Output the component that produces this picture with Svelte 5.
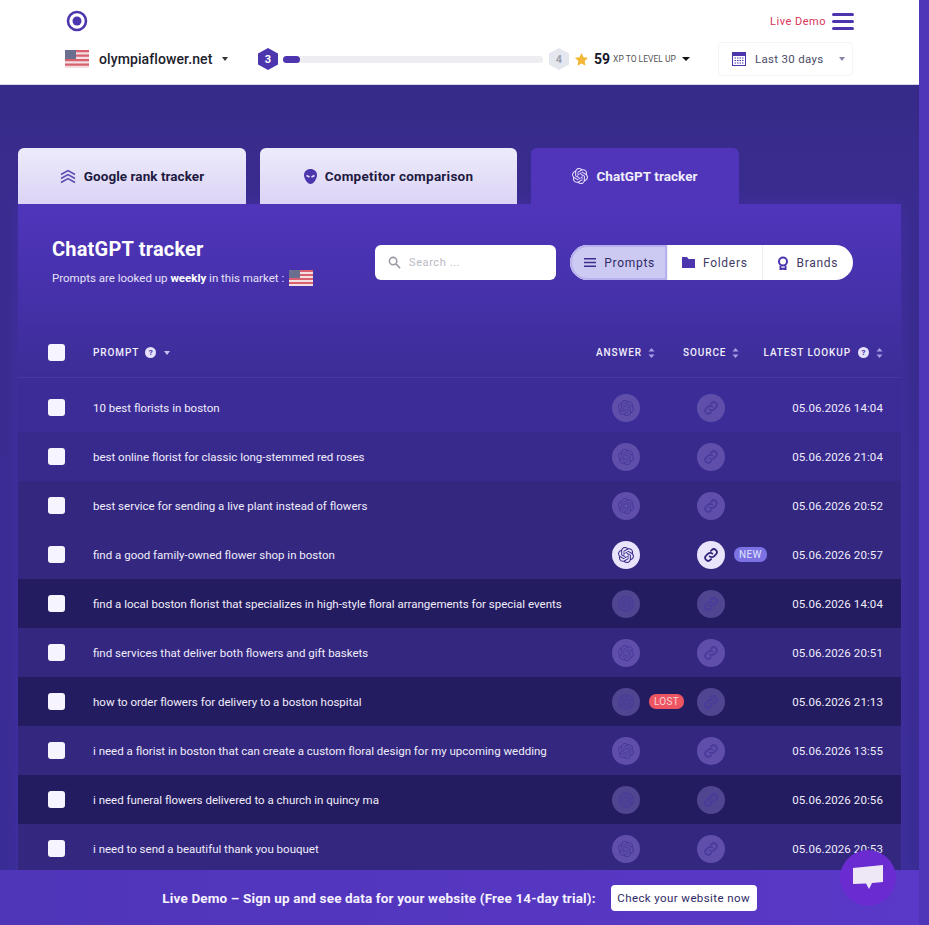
<script>
	const rows = [
		{ text: '10 best florists in boston', date: '05.06.2026 14:04', tone: 'r1' },
		{ text: 'best online florist for classic long-stemmed red roses', date: '05.06.2026 21:04', tone: 'r2' },
		{ text: 'best service for sending a live plant instead of flowers', date: '05.06.2026 20:52', tone: 'r3' },
		{ text: 'find a good family-owned flower shop in boston', date: '05.06.2026 20:57', tone: 'r3', lit: true, tag: 'NEW' },
		{ text: 'find a local boston florist that specializes in high-style floral arrangements for special events', date: '05.06.2026 14:04', tone: 'r5', faint: true },
		{ text: 'find services that deliver both flowers and gift baskets', date: '05.06.2026 20:51', tone: 'r3' },
		{ text: 'how to order flowers for delivery to a boston hospital', date: '05.06.2026 21:13', tone: 'r5', faint: true, lost: true },
		{ text: 'i need a florist in boston that can create a custom floral design for my upcoming wedding', date: '05.06.2026 13:55', tone: 'r3' },
		{ text: 'i need funeral flowers delivered to a church in quincy ma', date: '05.06.2026 20:56', tone: 'r5', faint: true },
		{ text: 'i need to send a beautiful thank you bouquet', date: '05.06.2026 20:53', tone: 'r3' }
	];

	const gptPath = 'M22.2819 9.8211a5.9847 5.9847 0 0 0-.5157-4.9108 6.0462 6.0462 0 0 0-6.5098-2.9A6.0651 6.0651 0 0 0 4.9807 4.1818a5.9847 5.9847 0 0 0-3.9977 2.9 6.0462 6.0462 0 0 0 .7427 7.0966 5.98 5.98 0 0 0 .511 4.9107 6.051 6.051 0 0 0 6.5146 2.9001A5.9847 5.9847 0 0 0 13.2599 24a6.0557 6.0557 0 0 0 5.7718-4.2058 5.9894 5.9894 0 0 0 3.9977-2.9001 6.0557 6.0557 0 0 0-.7475-7.0729zm-9.022 12.6081a4.4755 4.4755 0 0 1-2.8764-1.0408l.1419-.0804 4.7783-2.7582a.7948.7948 0 0 0 .3927-.6813v-6.7369l2.02 1.1686a.071.071 0 0 1 .038.052v5.5826a4.504 4.504 0 0 1-4.4945 4.4944zm-9.6607-4.1254a4.4708 4.4708 0 0 1-.5346-3.0137l.142.0852 4.783 2.7582a.7712.7712 0 0 0 .7806 0l5.8428-3.3685v2.3324a.0804.0804 0 0 1-.0332.0615L9.74 19.9502a4.4992 4.4992 0 0 1-6.1408-1.6464zM2.3408 7.8956a4.485 4.485 0 0 1 2.3655-1.9728V11.6a.7664.7664 0 0 0 .3879.6765l5.8144 3.3543-2.0201 1.1685a.0757.0757 0 0 1-.071 0l-4.8303-2.7865A4.504 4.504 0 0 1 2.3408 7.872zm16.5963 3.8558L13.1038 8.364 15.1192 7.2a.0757.0757 0 0 1 .071 0l4.8303 2.7913a4.4944 4.4944 0 0 1-.6765 8.1042v-5.6772a.79.79 0 0 0-.407-.667zm2.0107-3.0231l-.142-.0852-4.7735-2.7818a.7759.7759 0 0 0-.7854 0L9.409 9.2297V6.8974a.0662.0662 0 0 1 .0284-.0615l4.8303-2.7866a4.4992 4.4992 0 0 1 6.6802 4.66zM8.3065 12.863l-2.02-1.1638a.0804.0804 0 0 1-.038-.0567V6.0742a4.4992 4.4992 0 0 1 7.3757-3.4537l-.142.0805L8.704 5.459a.7948.7948 0 0 0-.3927.6813zm1.0976-2.3654l2.602-1.4998 2.6069 1.4998v2.9994l-2.5974 1.4997-2.6067-1.4997Z';
</script>

{#snippet flag(w, h)}
	<svg class="flag" width={w} height={h} viewBox="0 0 24 16" preserveAspectRatio="none">
		<rect width="24" height="16" fill="#f3dfe2" />
		<rect width="24" height="2" fill="#d8606f" />
		<rect y="4" width="24" height="2" fill="#d8606f" />
		<rect y="8" width="24" height="2" fill="#d8606f" />
		<rect y="12" width="24" height="2" fill="#d8606f" />
		<rect width="11" height="8" fill="#6b6f8f" />
	</svg>
{/snippet}

{#snippet gpt(color)}
	<svg width="16" height="16" viewBox="0 0 24 24" fill={color}>
		<path d={gptPath} />
	</svg>
{/snippet}

{#snippet chain(color)}
	<svg width="16" height="16" viewBox="0 0 24 24" fill="none" stroke={color} stroke-width="2.6" stroke-linecap="round">
		<path d="M10 14a4.5 4.5 0 0 0 6.4 0l3-3a4.5 4.5 0 0 0-6.4-6.4l-1.2 1.2" />
		<path d="M14 10a4.5 4.5 0 0 0-6.4 0l-3 3a4.5 4.5 0 0 0 6.4 6.4l1.2-1.2" />
	</svg>
{/snippet}

{#snippet help()}
	<span class="help">?</span>
{/snippet}

{#snippet sorter()}
	<svg class="sorter" width="7" height="10" viewBox="0 0 7 10" fill="#a99be6">
		<path d="M3.5 0 6.5 3.5H.5zM3.5 10 .5 6.5h6z" />
	</svg>
{/snippet}

<div class="page">
	<div class="content">
		<header class="topbar">
			<div class="top-line">
				<svg width="22" height="22" viewBox="0 0 22 22">
					<circle cx="11" cy="11" r="9" fill="none" stroke="#4d35ae" stroke-width="2.6" />
					<circle cx="11" cy="11" r="4.5" fill="#4d35ae" />
				</svg>
				<div class="top-right">
					<span class="live">Live Demo</span>
					<div class="burger"><i></i><i></i><i></i></div>
				</div>
			</div>
			<div class="sub-line">
				<div class="site">
					{@render flag(24, 18)}
					<span class="site-name">olympiaflower.net</span>
					<span class="caret dark"></span>
				</div>
				<div class="level">
					<svg width="22" height="24" viewBox="0 0 22 24">
						<path d="M11 1 21 6.5v11L11 23 1 17.5v-11z" fill="#4d35ae" />
						<text x="11" y="16" text-anchor="middle" class="hex-num">3</text>
					</svg>
					<div class="progress"><div class="progress-fill"></div></div>
					<svg width="22" height="24" viewBox="0 0 22 24">
						<path d="M11 1 21 6.5v11L11 23 1 17.5v-11z" fill="#e4e7ee" />
						<text x="11" y="16" text-anchor="middle" class="hex-num off">4</text>
					</svg>
					<svg class="star" width="15" height="15" viewBox="0 0 24 24"><path d="M12 1.5l3.2 6.9 7.3.9-5.4 5.1 1.4 7.4L12 18.2l-6.5 3.6 1.4-7.4L1.5 9.3l7.3-.9z" fill="#f2b736" /></svg>
					<span class="xp">59</span>
					<span class="xp-label">XP TO LEVEL UP</span>
					<span class="caret black"></span>
				</div>
				<div class="range">
					<svg width="14" height="14" viewBox="0 0 14 14" fill="none" stroke="#4d35ae">
						<rect x=".5" y="1.5" width="13" height="12" />
						<rect x=".5" y=".5" width="13" height="3" fill="#4d35ae" />
						<path d="M2.5 6h9M2.5 8.5h9M2.5 11h9" stroke-dasharray="1.5 1" />
					</svg>
					<span>Last 30 days</span>
					<span class="caret grey"></span>
				</div>
			</div>
		</header>

		<main class="main">
			<nav class="tabs">
				<button class="tab t1">
					<svg width="16" height="15" viewBox="0 0 16 15" fill="none" stroke="#5b4bb0" stroke-width="1.5">
						<path d="M1 5.5 8 1.5l7 4M1 9.5l7-4 7 4M1 13.5l7-4 7 4" />
					</svg>
					Google rank tracker
				</button>
				<button class="tab t2">
					<svg width="13" height="15" viewBox="0 0 13 15"><path d="M6.5 0C10 0 13 2.5 13 6c0 4-3.500 9-6.500 9S0 10 0 6c0-3.500 3-6 6.500-6z" fill="#4d35ae" /><path d="M2.5 6.5 5.500 8M10.500 6.500 7.500 8" stroke="#e6e0fa" stroke-width="1.5" /></svg>
					Competitor comparison
				</button>
				<button class="tab active">
					{@render gpt('#e6e0fa')}
					ChatGPT tracker
				</button>
			</nav>

			<section class="panel">
				<div class="panel-head">
					<div class="heading">
						<h1>ChatGPT tracker</h1>
						<p><span>Prompts are looked up <b>weekly</b> in this market :</span> {@render flag(24, 16)}</p>
					</div>
					<div class="search">
						<svg width="13" height="13" viewBox="0 0 14 14" fill="none" stroke="#9a9aa6" stroke-width="1.7"><circle cx="5.5" cy="5.5" r="4" /><path d="M8.5 8.5 13 13" /></svg>
						<span>Search ...</span>
					</div>
					<div class="segments">
						<div class="seg on">
							<svg width="13" height="11" viewBox="0 0 13 11" stroke="#3b2d8c" stroke-width="1.6"><path d="M0 1.5h13M0 5.5h13M0 9.5h13" /></svg>
							Prompts
						</div>
						<div class="seg">
							<svg width="13" height="11" viewBox="0 0 13 11"><path d="M0 0h5l1.5 2H13v9H0z" fill="#4d35ae" /></svg>
							Folders
						</div>
						<div class="seg last">
							<svg width="12" height="14" viewBox="0 0 12 14" fill="none" stroke="#4d35ae" stroke-width="2"><circle cx="6" cy="5.5" r="4" /><path d="M3.5 9.5v4l2.5-1 2.5 1v-4" /></svg>
							Brands
						</div>
					</div>
				</div>

				<div class="table-head">
					<span class="check"></span>
					<span class="col-prompt">PROMPT {@render help()} <span class="caret pale"></span></span>
					<span class="col-answer">ANSWER {@render sorter()}</span>
					<span class="col-source">SOURCE {@render sorter()}</span>
					<span class="col-date">LATEST LOOKUP {@render help()} {@render sorter()}</span>
				</div>

				{#each rows as row}
					<div class="row {row.tone}">
						<span class="check"></span>
						<span class="prompt">{row.text}</span>
						<span class="cell-answer">
							<span class="dot" class:lit={row.lit} class:faint={row.faint}>
								{@render gpt(row.lit ? '#3b2d8c' : '#4a3a9c')}
							</span>
							{#if row.lost}<span class="badge lost">LOST</span>{/if}
						</span>
						<span class="cell-source">
							<span class="dot" class:lit={row.lit} class:faint={row.faint}>
								{@render chain(row.lit ? '#2f2478' : '#4a3a9c')}
							</span>
							{#if row.tag}<span class="badge new">{row.tag}</span>{/if}
						</span>
						<span class="date">{row.date}</span>
					</div>
				{/each}
			</section>
		</main>
	</div>
	<div class="rail"></div>

	<div class="banner">
		<span>Live Demo – Sign up and see data for your website (Free 14-day trial):</span>
		<button class="cta">Check your website now</button>
	</div>
	<div class="chat">
		<svg width="32" height="26" viewBox="0 0 32 26"><path d="M1 3 31 0v17l-11 1-3 6-3-5.5-13 .5z" fill="#eee7f6" /></svg>
	</div>
</div>

<style>
	:global(body) {
		margin: 0;
		background: #4f35b8;
	}

	.page {
		position: relative;
		display: flex;
		height: 925px;
		overflow: hidden;
		font-family: Roboto, 'Liberation Sans', sans-serif;
	}

	.content {
		width: 919px;
		flex-shrink: 0;
		background: linear-gradient(180deg, #332a82 0%, #3a2c90 200px, #3a2d96 100%);
	}

	.rail {
		flex: 1;
		background: #4f35b8;
	}

	.topbar {
		height: 85px;
		box-sizing: border-box;
		background: #fff;
		padding: 10px 65px 0 66px;
		border-bottom: 1px solid #d8d6ea;
	}

	.top-line {
		display: flex;
		justify-content: space-between;
		align-items: center;
		height: 22px;
	}

	.top-right {
		display: flex;
		align-items: center;
		gap: 6px;
	}

	.live {
		font-size: 11px;
		letter-spacing: 0.5px;
		color: #d8345a;
	}

	.burger {
		display: flex;
		flex-direction: column;
		gap: 4px;
	}

	.burger i {
		display: block;
		width: 22px;
		height: 3px;
		border-radius: 2px;
		background: #4d35ae;
	}

	.sub-line {
		display: flex;
		align-items: center;
		margin-top: 9px;
		height: 36px;
		margin-right: -1px;
		margin-left: -2px;
	}

	.site {
		display: flex;
		align-items: center;
		gap: 10px;
		width: 192px;
		flex-shrink: 0;
		margin-left: 1px;
	}

	.site-name {
		font-size: 14px;
		font-weight: 500;
		letter-spacing: 0.1px;
		color: #1c1c2c;
	}

	.caret {
		display: inline-block;
		width: 0;
		height: 0;
		border-left: 3.5px solid transparent;
		border-right: 3.5px solid transparent;
		border-top: 4px solid #333;
	}

	.caret.black {
		border-top-color: #111;
		border-left-width: 4px;
		border-right-width: 4px;
		margin-left: 6px;
	}

	.caret.grey {
		border-top-color: #8884a8;
		margin-left: 7px;
	}

	.caret.pale {
		border-top-color: #c9c2f0;
		margin-left: 2px;
	}

	.level {
		display: flex;
		align-items: center;
		width: 461px;
		flex-shrink: 0;
	}

	.hex-num {
		font-size: 11px;
		font-weight: 700;
		fill: #fff;
		font-family: Roboto, sans-serif;
	}

	.hex-num.off {
		fill: #9a9fb0;
	}

	.progress {
		width: 260px;
		height: 7px;
		margin: 0 5px 0 4px;
		border-radius: 4px;
		background: #eeeef2;
		flex-shrink: 0;
	}

	.progress-fill {
		width: 17px;
		height: 100%;
		border-radius: 4px;
		background: #4d35ae;
	}

	.star {
		margin-left: 4px;
	}

	.xp {
		font-size: 14px;
		font-weight: 700;
		margin-left: 5px;
		color: #16162a;
	}

	.xp-label {
		font-size: 8.5px;
		margin-left: 3px;
		color: #555;
	}

	.range {
		display: flex;
		align-items: center;
		gap: 9px;
		height: 34px;
		width: 135px;
		box-sizing: border-box;
		padding-left: 13px;
		font-size: 11.5px;
		letter-spacing: 0.3px;
		color: #4a4a68;
		border: 1px solid #f4f4f8;
		border-radius: 4px;
	}

	.main {
		padding: 63px 18px 0;
	}

	.tabs {
		display: flex;
		gap: 14px;
		height: 56px;
	}

	.tab {
		display: flex;
		align-items: center;
		justify-content: center;
		gap: 8px;
		padding: 0;
		border: 0;
		border-radius: 6px 6px 0 0;
		background: linear-gradient(180deg, #ecebfa 0%, #dcd3f6 100%);
		font-family: inherit;
		font-size: 13.5px;
		font-weight: 700;
		letter-spacing: 0.05px;
		color: #1e1a40;
	}

	.t1 {
		width: 228px;
	}

	.t2 {
		width: 257px;
		letter-spacing: 0.25px;
	}

	.tab.active {
		width: 208px;
		background: #5035bb;
		color: #f1eefc;
	}

	.panel {
		width: 883px;
		background: linear-gradient(180deg, #5035bb 0%, #4330a6 110px, #3b2d94 180px);
		height: 700px;
		box-shadow: 0 0 14px rgba(80, 53, 187, 0.45);
	}

	.panel-head {
		display: flex;
		align-items: flex-start;
		height: 130px;
		padding: 32px 0 0 34px;
		box-sizing: border-box;
	}

	.heading {
		width: 323px;
		flex-shrink: 0;
		color: #fff;
	}

	h1 {
		margin: 0;
		font-size: 20px;
		line-height: 26px;
		font-weight: 700;
		letter-spacing: 0.2px;
	}

	.heading p {
		display: flex;
		align-items: center;
		gap: 5px;
		margin: 8px 0 0;
		font-size: 11.5px;
		color: #e6e1fa;
	}

	.heading b {
		color: #fff;
	}

	.search {
		display: flex;
		align-items: center;
		gap: 8px;
		width: 181px;
		height: 35px;
		margin-top: 9px;
		padding-left: 13px;
		box-sizing: border-box;
		border-radius: 6px;
		background: #fff;
		font-size: 11px;
		letter-spacing: 0.6px;
		color: #b9b9c4;
		flex-shrink: 0;
	}

	.segments {
		display: flex;
		height: 35px;
		margin: 9px 0 0 14px;
		border-radius: 18px;
		background: #fff;
		overflow: hidden;
		flex-shrink: 0;
	}

	.seg {
		display: flex;
		align-items: center;
		gap: 8px;
		padding: 0 14px;
		font-size: 12px;
		letter-spacing: 0.7px;
		color: #3f3a66;
		border-right: 1px solid #eeeef6;
	}

	.seg.on {
		width: 98px;
		box-sizing: border-box;
		justify-content: flex-end;
		padding-right: 12px;
		background: #ccc9f2;
		color: #2f2a66;
		border-radius: 18px 0 0 18px;
		box-shadow: inset 0 0 0 2px #b6b1ec;
	}

	.seg.last {
		border-right: 0;
		padding-right: 15px;
	}

	.table-head,
	.row {
		display: grid;
		grid-template-columns: 45px 519px 85px 85px 101px;
		align-items: center;
		padding-left: 30px;
	}

	.table-head {
		height: 49px;
		margin-top: -6px;
		margin-bottom: 5px;
		border-bottom: 1px solid #4935a8;
		font-size: 10px;
		font-weight: 500;
		letter-spacing: 0.9px;
		color: #f1eefc;
	}

	.col-prompt {
		display: flex;
		align-items: center;
		gap: 6px;
	}

	.col-answer,
	.col-source {
		display: flex;
		align-items: center;
		gap: 6px;
	}

	.col-answer {
		margin-left: -16px;
	}

	.col-source {
		margin-left: -14px;
	}

	.col-date {
		display: flex;
		align-items: center;
		justify-content: flex-end;
		gap: 7px;
		white-space: nowrap;
	}

	.help {
		display: inline-flex;
		align-items: center;
		justify-content: center;
		flex-shrink: 0;
		width: 11px;
		height: 11px;
		border-radius: 50%;
		background: #e6e1fa;
		color: #4330a6;
		font-size: 8px;
		font-weight: 700;
		letter-spacing: 0;
	}

	.sorter {
		flex-shrink: 0;
	}

	.check {
		display: block;
		width: 17px;
		height: 17px;
		border-radius: 3px;
		background: #f6f4fe;
	}

	.row {
		height: 49px;
		font-size: 11.5px;
		color: #f0edfc;
	}

	.r1 {
		background: #3c2c98;
	}

	.r2 {
		background: #382a8c;
	}

	.r3 {
		background: #33277f;
	}

	.r5 {
		background: #241c60;
	}

	.prompt {
		white-space: nowrap;
	}

	.cell-answer,
	.cell-source {
		display: flex;
		align-items: center;
		gap: 9px;
		min-width: 0;
	}

	.dot {
		display: flex;
		align-items: center;
		justify-content: center;
		width: 28px;
		height: 28px;
		border-radius: 50%;
		background: #5f4faa;
		flex-shrink: 0;
	}

	.dot.faint {
		background: #4f4590;
	}

	.dot.lit {
		background: #e9e4fb;
	}

	.badge {
		display: inline-block;
		padding: 1px 5px;
		border-radius: 7px;
		font-size: 10px;
		letter-spacing: 0.3px;
		line-height: 13px;
	}

	.badge.new {
		background: #7c72e4;
		color: #dfe3fb;
	}

	.badge.lost {
		background: #ee5562;
		color: #f9d5d8;
	}

	.date {
		text-align: right;
		white-space: nowrap;
		letter-spacing: 0.1px;
	}

	.banner {
		position: absolute;
		left: 0;
		bottom: 0;
		width: 919px;
		height: 55px;
		display: flex;
		align-items: center;
		justify-content: center;
		gap: 15px;
		background: linear-gradient(90deg, #4f35b8, #5a38c8);
		color: #f5f2ff;
		font-size: 13.5px;
		font-weight: 700;
		letter-spacing: 0.15px;
	}

	.cta {
		height: 26px;
		width: 146px;
		padding: 0;
		border: 0;
		border-radius: 4px;
		background: #fff;
		font-family: inherit;
		font-size: 11.5px;
		letter-spacing: 0.4px;
		color: #2f2a66;
	}

	.chat {
		position: absolute;
		left: 840px;
		top: 850px;
		width: 56px;
		height: 56px;
		display: flex;
		align-items: center;
		justify-content: center;
		border-radius: 50%;
		background: #6a2cd0;
	}
</style>
